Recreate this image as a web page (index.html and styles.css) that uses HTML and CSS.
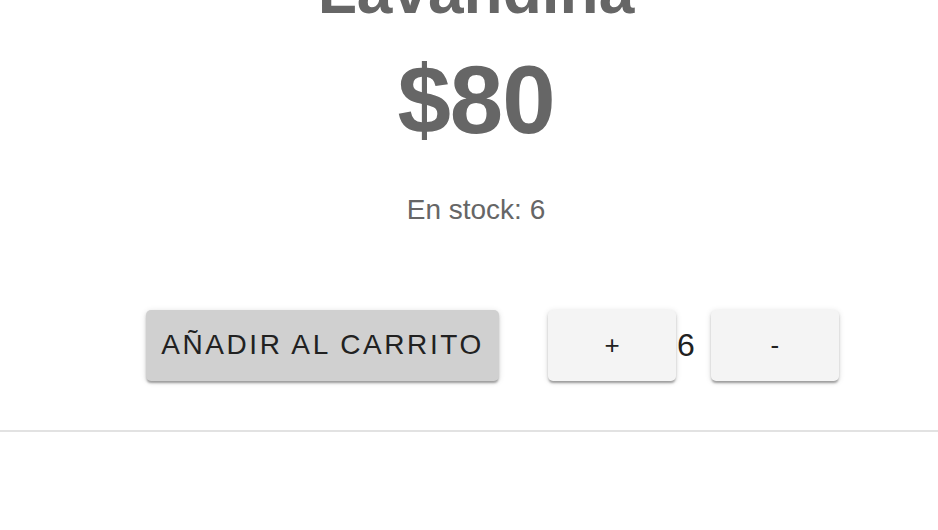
FILE: index.html
```html
<!DOCTYPE html>
<html lang="es">
<head>
<meta charset="utf-8">
<title>Lavandina</title>
<link rel="stylesheet" href="styles.css">
</head>
<body>
<main class="page">
  <section class="product">
    <h1 class="title">Lavandina</h1>
    <p class="price">$80</p>
    <p class="stock">En stock: 6</p>
  </section>
  <div class="actions">
    <button class="btn btn-add">Añadir al carrito</button>
    <div class="qty">
      <button class="btn btn-qty">+</button>
      <span class="qty-value">6</span>
      <button class="btn btn-qty">-</button>
    </div>
  </div>
  <hr class="divider">
</main>
</body>
</html>
```

FILE: styles.css
```css
* { box-sizing: border-box; }

html, body {
  margin: 0;
  padding: 0;
  background: #ffffff;
  font-family: "Liberation Sans", Arial, Helvetica, sans-serif;
}

.page {
  margin-top: -47px;
}

.product {
  display: flex;
  flex-direction: column;
  align-items: center;
  padding-left: 14px;
  color: #666666;
}

.title {
  margin: 0;
  font-size: 64px;
  line-height: 1.2;
  font-weight: 700;
}

.price {
  margin: 12px 0 0;
  font-size: 96px;
  line-height: 1.2;
  font-weight: 700;
  letter-spacing: -1px;
}

.stock {
  margin: 36px 0 0;
  font-size: 28px;
  line-height: 1.2;
}

.actions {
  display: flex;
  align-items: center;
  gap: 49px;
  margin-top: 83px;
  padding-left: 146px;
}

.btn {
  border: none;
  border-radius: 5px;
  height: 71px;
  font-family: inherit;
  color: #212121;
  cursor: pointer;
  box-shadow: 0px 3px 2px -1px rgba(0,0,0,0.22), 0px 2px 3px 0px rgba(0,0,0,0.16), 0px 1px 6px 0px rgba(0,0,0,0.12);
}

.btn-add {
  width: 353px;
  padding: 0;
  background: #d0d0d0;
  font-size: 28px;
  letter-spacing: 2.6px;
  text-transform: uppercase;
}

.qty {
  display: flex;
  align-items: center;
}

.btn-qty {
  width: 128px;
  padding: 0;
  background: #f4f4f4;
  font-size: 26px;
}

.qty-value {
  font-size: 32px;
  color: #212121;
  margin: 0 16px 0 1px;
}

.divider {
  margin: 49px 0 0;
  border: none;
  border-top: 2px solid #e2e2e2;
}
```
